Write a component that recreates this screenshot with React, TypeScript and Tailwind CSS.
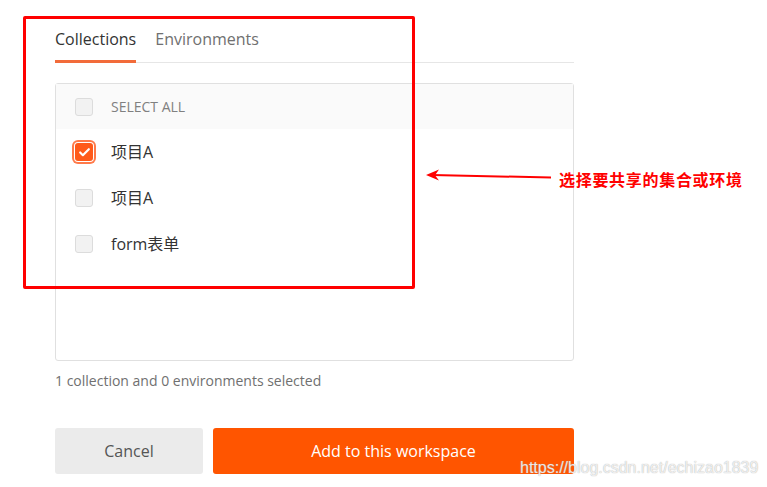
import { Check } from 'lucide-react';

type RowProps = {
  label: string;
  checked?: boolean;
};

const Box = ({ checked }: { checked?: boolean }) =>
  checked ? (
    <span className="flex h-[18px] w-[18px] shrink-0 items-center justify-center rounded-[3px] bg-[#ff5a1a] ring-2 ring-[#ff7a4a] ring-offset-1">
      <Check className="h-[13px] w-[13px] text-white" strokeWidth={4} />
    </span>
  ) : (
    <span className="h-[18px] w-[18px] shrink-0 rounded-[3px] border border-[#dcdcdc] bg-[#f2f2f2]" />
  );

const Row = ({ label, checked }: RowProps) => (
  <div className="flex h-[46px] items-center gap-[18px] pl-[19px]">
    <Box checked={checked} />
    <span className="text-[16px] text-[#333]">{label}</span>
  </div>
);

export default function App() {
  const items = [
    { label: '项目A', checked: true },
    { label: '项目A' },
    { label: 'form表单' },
  ];

  return (
    <div
      className="relative h-[487px] w-[767px] overflow-hidden bg-white"
      style={{ fontFamily: '"Open Sans", "Noto Sans CJK SC", sans-serif' }}
    >
      <div className="w-[574px] pl-[55px] pt-[27px]">
        {/* Tabs */}
        <div className="flex gap-[19px] border-b border-[#e6e6e6]">
          <div className="-mb-px border-b-[3px] border-[#f26b3a] pb-[9px] text-[16px] leading-6 text-[#333]">
            Collections
          </div>
          <div className="pb-[9px] text-[16px] leading-6 text-[#707070]">Environments</div>
        </div>

        {/* List */}
        <div className="mt-[20px] h-[278px] rounded-[3px] border border-[#e0e0e0]">
          <div className="flex h-[45px] items-center gap-[18px] bg-[#fafafa] pl-[19px]">
            <Box />
            <span className="text-[14px] text-[#808080]">SELECT ALL</span>
          </div>
          {items.map((item, index) => (
            <Row key={index} {...item} />
          ))}
        </div>

        <p className="mt-[10px] text-[14px] leading-5 text-[#707070]">
          1 collection and 0 environments selected
        </p>

        {/* Actions */}
        <div className="mt-[37px] flex gap-[10px]">
          <button className="h-[46px] w-[148px] rounded-[3px] bg-[#ebebeb] text-[16px] text-[#555]">
            Cancel
          </button>
          <button className="h-[46px] flex-1 rounded-[3px] bg-[#ff5500] text-[16px] text-white">
            Add to this workspace
          </button>
        </div>
      </div>

      {/* Annotation */}
      <div className="absolute left-[23px] top-[16px] h-[273px] w-[392px] rounded-[2px] border-[3px] border-[#ff0000]" />
      <svg className="absolute left-[424px] top-[168px]" width="130" height="16" viewBox="0 0 130 16">
        <line x1="8" y1="7" x2="127" y2="9.5" stroke="#ff0000" strokeWidth="2" />
        <path d="M2 7 L15 1.5 L11 7.2 L15 12.5 Z" fill="#ff0000" />
      </svg>
      <div
        className="absolute left-[559px] top-[168px] text-[16px] font-bold leading-[22px] tracking-[0.7px] text-[#ff0000]"
        style={{ fontFamily: '"Noto Sans CJK SC", sans-serif' }}
      >
        选择要共享的集合或环境
      </div>

      {/* Watermark */}
      <div
        className="absolute left-[520px] top-[457px] whitespace-nowrap text-[16px] leading-[22px] text-white/80 [text-shadow:0_0_1px_#9a9a9a]"
        style={{ fontFamily: '"Liberation Sans", sans-serif' }}
      >
        https://blog.csdn.net/echizao1839
      </div>
    </div>
  );
}
